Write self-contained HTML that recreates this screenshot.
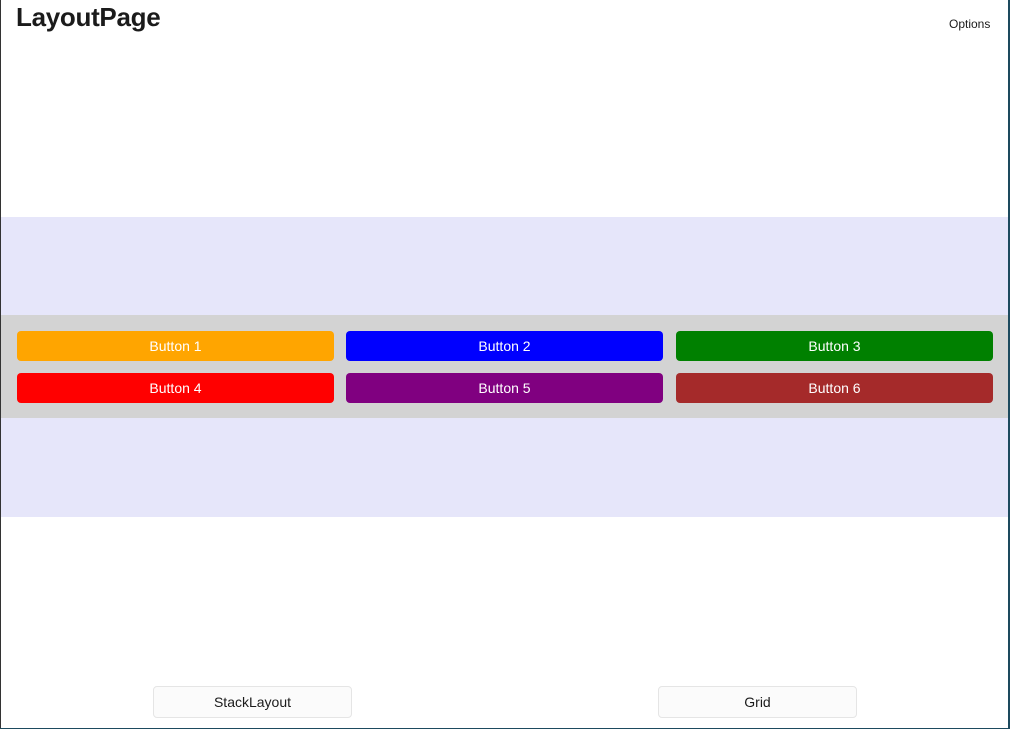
<!DOCTYPE html>
<html><head><meta charset="utf-8"><style>
html,body{margin:0;padding:0;width:1010px;height:729px;overflow:hidden;background:#fff;font-family:"Segoe UI","Liberation Sans",sans-serif;}
.frame{position:absolute;left:0;top:0;width:1010px;height:729px;}
.lb{position:absolute;left:0;top:0;width:1px;height:729px;background:#333;}
.rb{position:absolute;left:1008px;top:0;width:2px;height:729px;background:#1d4a5e;}
.bb{position:absolute;left:0;top:728px;width:1010px;height:1px;background:#1d4a5e;}
.title{position:absolute;left:16px;top:0px;font-size:26px;font-weight:bold;color:#1b1b1b;line-height:34px;letter-spacing:-0.3px;}
.opt{position:absolute;left:949px;top:17px;font-size:12px;color:#1b1b1b;}
.lav{position:absolute;left:1px;top:217px;width:1007px;height:300px;background:#e6e6fa;}
.gray{position:absolute;left:1px;top:315px;width:1007px;height:103px;background:#d3d3d3;}
.b{position:absolute;width:317px;height:30px;border-radius:4px;color:#fff;font-size:14px;line-height:30px;text-align:center;box-sizing:border-box;}
.nb{position:absolute;top:686px;width:199px;height:32px;border:1px solid #e5e5e5;border-radius:4px;background:#fbfbfb;box-sizing:border-box;text-align:center;line-height:30px;font-size:14px;color:#1b1b1b;}
</style></head><body><div class="frame">
<div class="title">LayoutPage</div>
<div class="opt">Options</div>
<div class="lav"></div>
<div class="gray"></div>
<div class="b" style="left:17px;top:331px;background:#ffa500">Button 1</div>
<div class="b" style="left:346px;top:331px;background:#0000ff">Button 2</div>
<div class="b" style="left:676px;top:331px;background:#008000">Button 3</div>
<div class="b" style="left:17px;top:373px;background:#ff0000">Button 4</div>
<div class="b" style="left:346px;top:373px;background:#800080">Button 5</div>
<div class="b" style="left:676px;top:373px;background:#a52a2a">Button 6</div>
<div class="nb" style="left:153px">StackLayout</div>
<div class="nb" style="left:658px">Grid</div>
<div class="lb"></div><div class="rb"></div><div class="bb"></div>
</div></body></html>
